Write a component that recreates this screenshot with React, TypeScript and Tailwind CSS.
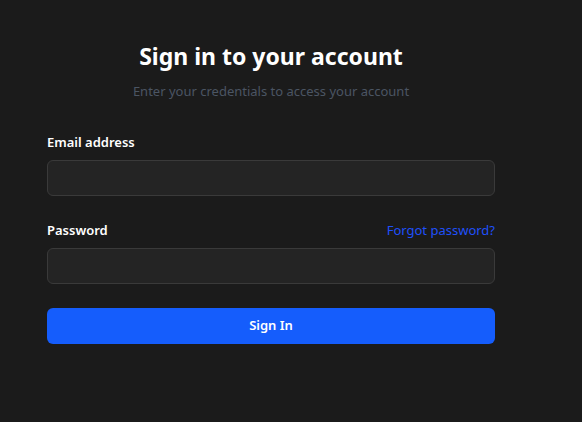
import React from 'react';

const App: React.FC = () => {
  return (
    <div
      className="min-h-screen bg-[#1b1b1b] pl-[47px] pt-[40px]"
      style={{ fontFamily: '"Noto Sans", "Open Sans", sans-serif' }}
    >
      <div className="w-[448px]">
        <div className="text-center">
          <h1 className="text-[23px] font-bold text-white leading-8">Sign in to your account</h1>
          <p className="mt-[10px] text-[13px] text-[#4b5563]">Enter your credentials to access your account</p>
        </div>

        <form className="mt-[30px] flex flex-col" onSubmit={(e) => e.preventDefault()}>
          <label className="text-[13px] font-semibold text-white leading-5">Email address</label>
          <input
            type="email"
            className="mt-[8px] h-9 w-full rounded-md border border-[#3a3a3a] bg-[#242424] px-3 text-sm text-white outline-none"
          />

          <div className="mt-[24px] flex items-center justify-between leading-5">
            <label className="text-[13px] font-semibold text-white">Password</label>
            <a href="#" className="text-[13px] text-[#1f50fa]">Forgot password?</a>
          </div>
          <input
            type="password"
            className="mt-[8px] h-9 w-full rounded-md border border-[#3a3a3a] bg-[#242424] px-3 text-sm text-white outline-none"
          />

          <button
            type="submit"
            className="mt-[24px] h-9 w-full rounded-md bg-[#155dfc] text-[13px] font-semibold text-white"
          >
            Sign In
          </button>
        </form>
      </div>
    </div>
  );
};

export default App;
